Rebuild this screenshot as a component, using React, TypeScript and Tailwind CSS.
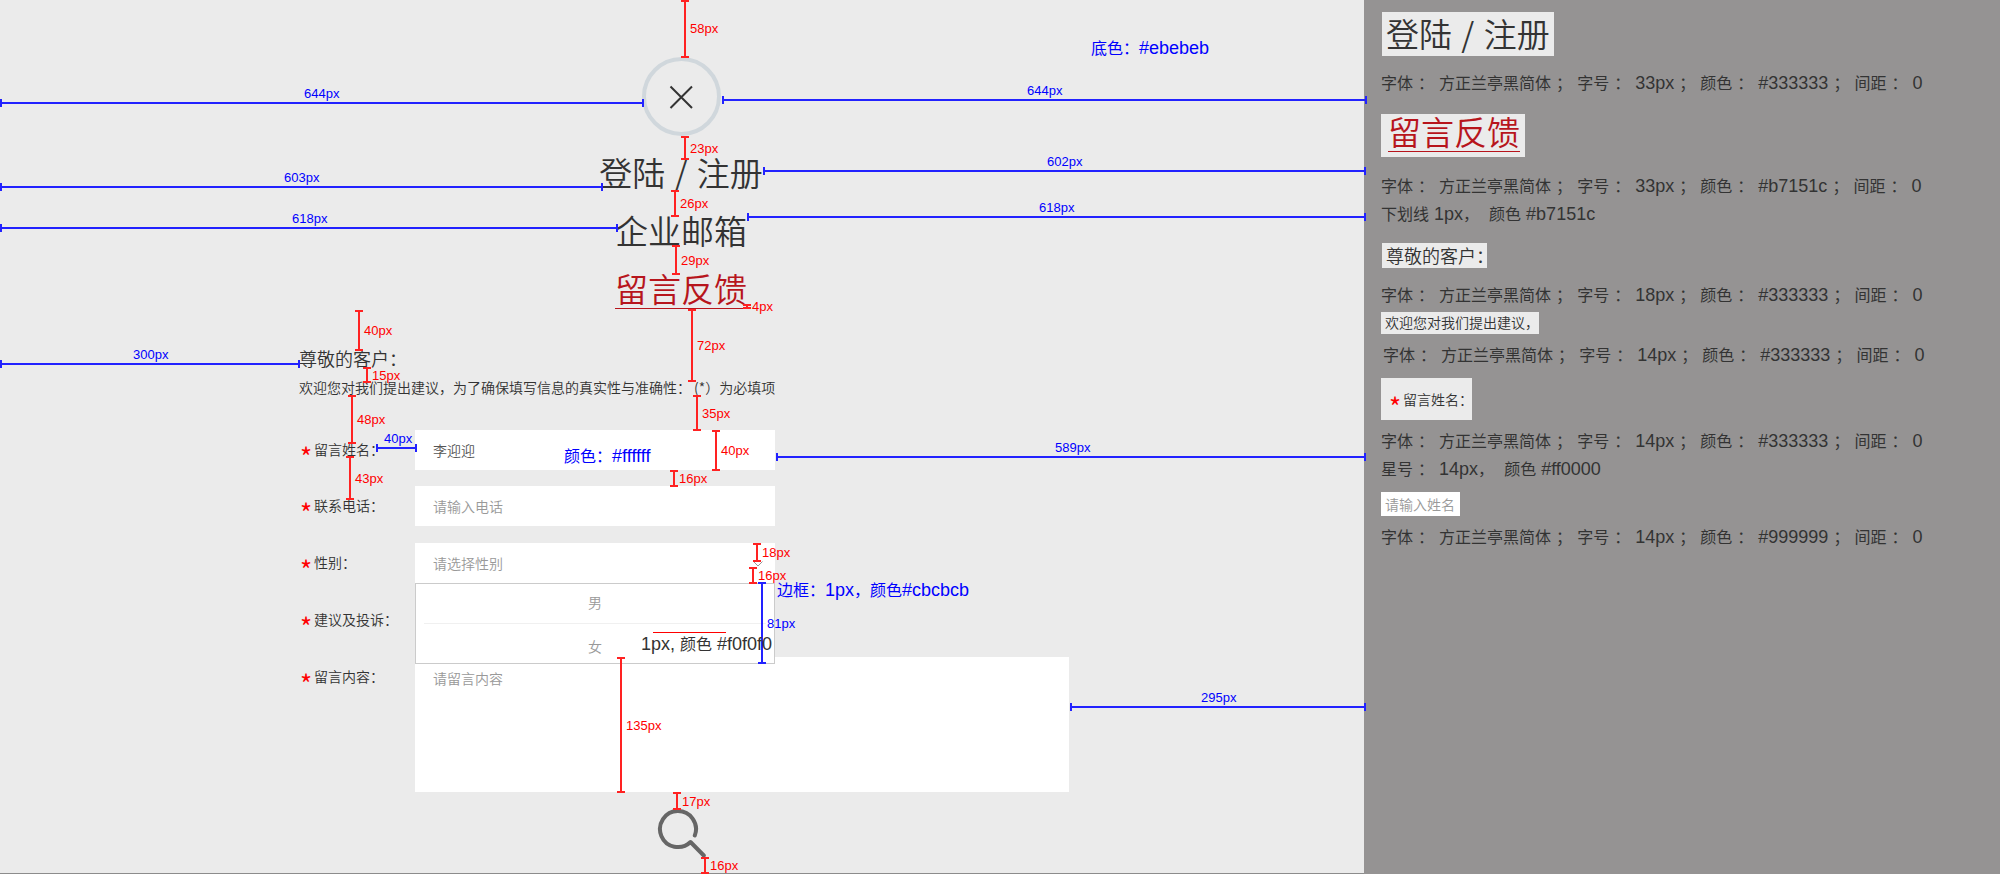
import type { ReactNode } from "react";

type Tone = "red" | "blue";

interface Measure {
  axis: "x" | "y";
  tone: Tone;
  /** Position of the line across its axis. */
  at: number;
  from: number;
  to: number;
  text: string;
  /** Left edge and vertical centre of the caption. */
  labelX: number;
  labelY: number;
}

const measures: Measure[] = [
  { axis: "y", tone: "red", at: 685, from: 0, to: 58, text: "58px", labelX: 690, labelY: 29 },
  { axis: "y", tone: "red", at: 685, from: 136, to: 160, text: "23px", labelX: 690, labelY: 149 },
  { axis: "y", tone: "red", at: 675, from: 190, to: 217, text: "26px", labelX: 680, labelY: 204 },
  { axis: "y", tone: "red", at: 676, from: 245, to: 275, text: "29px", labelX: 681, labelY: 261 },
  { axis: "y", tone: "red", at: 747, from: 304, to: 309, text: "4px", labelX: 752, labelY: 307 },
  { axis: "y", tone: "red", at: 692, from: 309, to: 382, text: "72px", labelX: 697, labelY: 346 },
  { axis: "y", tone: "red", at: 697, from: 395, to: 431, text: "35px", labelX: 702, labelY: 414 },
  { axis: "y", tone: "red", at: 716, from: 430, to: 471, text: "40px", labelX: 721, labelY: 451 },
  { axis: "y", tone: "red", at: 674, from: 470, to: 487, text: "16px", labelX: 679, labelY: 479 },
  { axis: "y", tone: "red", at: 757, from: 543, to: 562, text: "18px", labelX: 762, labelY: 553 },
  { axis: "y", tone: "red", at: 753, from: 567, to: 584, text: "16px", labelX: 758, labelY: 576 },
  { axis: "y", tone: "blue", at: 762, from: 582, to: 664, text: "81px", labelX: 767, labelY: 624 },
  { axis: "y", tone: "red", at: 621, from: 657, to: 793, text: "135px", labelX: 626, labelY: 726 },
  { axis: "y", tone: "red", at: 677, from: 792, to: 810, text: "17px", labelX: 682, labelY: 802 },
  { axis: "y", tone: "red", at: 705, from: 857, to: 874, text: "16px", labelX: 710, labelY: 866 },
  { axis: "y", tone: "red", at: 359, from: 310, to: 351, text: "40px", labelX: 364, labelY: 331 },
  { axis: "y", tone: "red", at: 367, from: 367, to: 383, text: "15px", labelX: 372, labelY: 376 },
  { axis: "y", tone: "red", at: 352, from: 395, to: 444, text: "48px", labelX: 357, labelY: 420 },
  { axis: "y", tone: "red", at: 350, from: 456, to: 500, text: "43px", labelX: 355, labelY: 479 },
  { axis: "x", tone: "blue", at: 103, from: 0, to: 644, text: "644px", labelX: 304, labelY: 94 },
  { axis: "x", tone: "blue", at: 100, from: 722, to: 1367, text: "644px", labelX: 1027, labelY: 91 },
  { axis: "x", tone: "blue", at: 187, from: 0, to: 603, text: "603px", labelX: 284, labelY: 178 },
  { axis: "x", tone: "blue", at: 171, from: 763, to: 1366, text: "602px", labelX: 1047, labelY: 162 },
  { axis: "x", tone: "blue", at: 228, from: 0, to: 618, text: "618px", labelX: 292, labelY: 219 },
  { axis: "x", tone: "blue", at: 217, from: 747, to: 1366, text: "618px", labelX: 1039, labelY: 208 },
  { axis: "x", tone: "blue", at: 364, from: 0, to: 300, text: "300px", labelX: 133, labelY: 355 },
  { axis: "x", tone: "blue", at: 448, from: 376, to: 417, text: "40px", labelX: 384, labelY: 439 },
  { axis: "x", tone: "blue", at: 457, from: 776, to: 1366, text: "589px", labelX: 1055, labelY: 448 },
  { axis: "x", tone: "blue", at: 707, from: 1070, to: 1366, text: "295px", labelX: 1201, labelY: 698 },
];

function MeasureMark({ axis, tone, at, from, to, text, labelX, labelY }: Measure) {
  const line = tone === "red" ? "bg-[#ff2222]" : "bg-[#2222ff]";
  const ink = tone === "red" ? "text-[#ff0000]" : "text-[#0000ff]";
  const length = to - from;
  return (
    <>
      {axis === "y" ? (
        <span
          className="absolute flex w-2 flex-col items-center justify-between"
          style={{ left: at - 4, top: from, height: length }}
        >
          <span className={`h-0.5 w-2 ${line}`} />
          <span className={`w-0.5 flex-1 ${line}`} />
          <span className={`h-0.5 w-2 ${line}`} />
        </span>
      ) : (
        <span
          className="absolute flex h-2 items-center justify-between"
          style={{ top: at - 4, left: from, width: length }}
        >
          <span className={`h-2 w-0.5 ${line}`} />
          <span className={`h-0.5 flex-1 ${line}`} />
          <span className={`h-2 w-0.5 ${line}`} />
        </span>
      )}
      <span
        className={`absolute text-[13px] leading-4 whitespace-nowrap ${ink}`}
        style={{ left: labelX, top: labelY - 8 }}
      >
        {text}
      </span>
    </>
  );
}

/** Spec text: Latin runs are set larger than the Chinese around them. */
function Mixed({ children }: { children: string }) {
  return (
    <>
      {children.split(/([ -~]+)/).map((run, i) => (
        <span key={i} className={i % 2 ? "text-[18px] leading-none" : "text-[16px] leading-none"}>
          {run}
        </span>
      ))}
    </>
  );
}

function Note({ className, children }: { className: string; children: string }) {
  return (
    <p className={`absolute leading-6 whitespace-pre font-[Liberation_Sans,'Noto_Sans_CJK_SC',sans-serif] ${className}`}>
      <Mixed>{children}</Mixed>
    </p>
  );
}

function SpecLine({ className = "", children }: { className?: string; children: string }) {
  return (
    <p className={`leading-7 whitespace-pre font-[Liberation_Sans,'Noto_Sans_CJK_SC',sans-serif] ${className}`}>
      <Mixed>{children}</Mixed>
    </p>
  );
}

function Star() {
  return <span className="mt-3.5 w-3 text-[26px] leading-4 font-normal text-[#ff0000]">*</span>;
}

function Row({
  id,
  label,
  className = "",
  children,
}: {
  id: string;
  label: string;
  className?: string;
  children?: ReactNode;
}) {
  return (
    <div className={`flex items-start ${className}`}>
      <label htmlFor={id} className="flex h-10 w-[116px] shrink-0 items-center gap-0.5 pb-0.5 pl-px text-sm">
        <Star />
        {label}
      </label>
      {children}
    </div>
  );
}

const field = "h-10 w-[360px] rounded-none bg-white px-[18px] text-sm outline-none placeholder:text-[#999999] placeholder:opacity-100";

export default function App() {
  return (
    <div className="flex min-h-screen font-[350] text-[#333333] font-['Noto_Sans_CJK_SC',sans-serif]">
      <main className="relative w-[68.2%] border-b border-[#8c8c8c] bg-[#ebebeb]">
        <nav className="flex flex-col items-center pt-[57px] pr-0.5">
          <button
            type="button"
            aria-label="关闭"
            className="flex size-[79px] items-center justify-center rounded-full border-4 border-[#d0d7dc]"
          >
            <svg viewBox="0 0 24 24" className="size-6" fill="none" stroke="#333333" strokeWidth="2">
              <path d="M1.5 1.5 L23 23 M23 1.5 L1.5 23" />
            </svg>
          </button>
          <div className="mt-[19px] flex flex-col items-center gap-6 text-[33px] leading-[34px]">
            <a href="#login">
              登陆 <span className="mx-0.5">/</span> 注册
            </a>
            <a href="#mail">企业邮箱</a>
            <a href="#feedback" className="border-b border-[#b7151c] pb-[3px] text-[#b7151c]">
              留言反馈
            </a>
          </div>
        </nav>

        <form className="mt-[37px] mr-[295px] ml-[299px]" onSubmit={(e) => e.preventDefault()}>
          <h2 className="text-lg leading-6">尊敬的客户：</h2>
          <p className="mt-[7px] text-sm leading-5 whitespace-nowrap">
            欢迎您对我们提出建议，为了确保填写信息的真实性与准确性：&nbsp;(*）为必填项
          </p>

          <Row id="name" label="留言姓名：" className="mt-[33px]">
            <input id="name" type="text" defaultValue="李迎迎" className={`${field} text-[#555555]`} />
          </Row>
          <Row id="phone" label="联系电话：" className="mt-4">
            <input id="phone" type="tel" placeholder="请输入电话" className={field} />
          </Row>
          <Row id="gender" label="性别：" className="mt-[17px]">
            <div className="relative">
              <select id="gender" className={`${field} appearance-none text-[#999999]`} defaultValue="">
                <option value="">请选择性别</option>
                <option value="m">男</option>
                <option value="f">女</option>
              </select>
              <svg
                viewBox="0 0 10 6"
                className="pointer-events-none absolute top-[18px] right-3 h-1.5 w-2.5"
                fill="none"
                stroke="#999999"
              >
                <path d="M0.5 0.5 L5 5 L9.5 0.5" />
              </svg>
              <ul className="absolute top-full left-0 z-10 h-[81px] w-full border border-[#cbcbcb] bg-white px-2 text-center text-sm text-[#999999]">
                <li className="h-10 border-b border-[#f0f0f0] leading-9">男</li>
                <li className="pt-1 leading-9">女</li>
              </ul>
            </div>
          </Row>
          <Row id="content-type" label="建议及投诉：" className="mt-[17px]" />
          <Row id="content" label="留言内容：" className="mt-[17px]">
            <textarea
              id="content"
              placeholder="请留言内容"
              className="block h-[135px] min-w-0 flex-1 resize-none bg-white px-[18px] py-[11px] text-sm leading-5 outline-none placeholder:text-[#999999] placeholder:opacity-100"
            />
          </Row>
        </form>

        <div className="mt-4 flex justify-center">
          <button type="button" aria-label="搜索">
            <svg viewBox="0 0 50 50" className="size-[50px]" fill="none" stroke="#666666" strokeWidth="4" strokeLinecap="round">
              <path d="M37.800 27.500 A18 18 0 1 0 33.500 34 L46.800 47.500" strokeLinejoin="round" />
            </svg>
          </button>
        </div>

        <div className="pointer-events-none absolute top-0 left-0 z-20 font-normal font-[Liberation_Sans,sans-serif]">
          {measures.map((m, i) => (
            <MeasureMark key={i} {...m} />
          ))}
          <Note className="top-[37px] left-[1091px] text-[#0000ff]">底色：#ebebeb</Note>
          <Note className="top-[445px] left-[564px] text-[#0000ff]">颜色：#ffffff</Note>
          <Note className="top-[579px] left-[777px] text-[#0000ff]">边框：1px，颜色#cbcbcb</Note>
          <span className="absolute top-[632px] left-[653px] h-px w-[73px] bg-[#ff0000]" />
          <Note className="top-[633px] left-[641px]">1px, 颜色 #f0f0f0</Note>
        </div>
      </main>

      <aside className="flex flex-1 flex-col items-start bg-[#959393] pt-3 pl-[17px] font-normal">
        <div className="ml-px h-11 bg-[#ebebeb] px-1 text-[33px] leading-[42px] font-[350]">
          登陆 <span className="mx-0.5">/</span> 注册
        </div>
        <SpecLine className="mt-3.5">字体 ： 方正兰亭黑简体 ； 字号 ： 33px ； 颜色 ： #333333 ； 间距 ： 0</SpecLine>

        <div className="mt-4 h-[43px] bg-[#ebebeb] pr-[5px] pl-[7px] text-[33px] leading-[34px] font-[350]">
          <span className="block border-b border-[#b7151c] pb-[3px] text-[#b7151c]">留言反馈</span>
        </div>
        <SpecLine className="mt-4">字体 ： 方正兰亭黑简体 ； 字号 ： 33px ； 颜色 ： #b7151c ； 间距 ： 0</SpecLine>
        <SpecLine>下划线 1px，  颜色 #b7151c</SpecLine>

        <div className="mt-3.5 ml-px h-[25px] w-[105px] bg-[#ebebeb] pl-1 text-lg leading-6 font-[350] whitespace-nowrap">
          尊敬的客户：
        </div>
        <SpecLine className="mt-3.5">字体 ： 方正兰亭黑简体 ； 字号 ： 18px ； 颜色 ： #333333 ； 间距 ： 0</SpecLine>

        <div className="mt-0.5 h-[22px] w-[158px] bg-[#ebebeb] pl-1 text-sm leading-5 font-[350] whitespace-nowrap">
          欢迎您对我们提出建议，
        </div>
        <SpecLine className="mt-2 pl-0.5">字体 ： 方正兰亭黑简体 ； 字号 ： 14px ； 颜色 ： #333333 ； 间距 ： 0</SpecLine>

        <div className="mt-2 flex h-[42px] w-[91px] items-center gap-0.5 bg-[#ebebeb] pl-2 text-sm font-[350] whitespace-nowrap">
          <Star />
          留言姓名：
        </div>
        <SpecLine className="mt-2">字体 ： 方正兰亭黑简体 ； 字号 ： 14px ； 颜色 ： #333333 ； 间距 ： 0</SpecLine>
        <SpecLine>星号 ： 14px，  颜色 #ff0000</SpecLine>

        <div className="mt-2 h-6 w-[79px] bg-white pl-1 text-sm leading-6 font-[350] text-[#999999]">请输入姓名</div>
        <SpecLine className="mt-2">字体 ： 方正兰亭黑简体 ； 字号 ： 14px ； 颜色 ： #999999 ； 间距 ： 0</SpecLine>
      </aside>
    </div>
  );
}
